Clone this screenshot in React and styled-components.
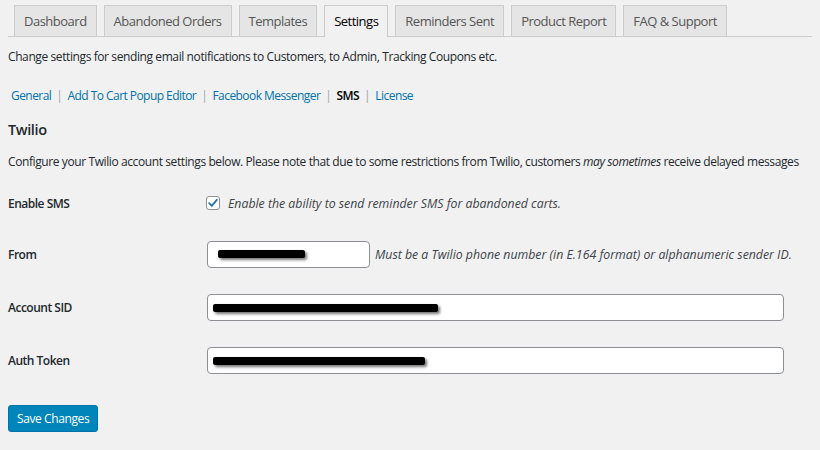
import React from "react";
import styled, { createGlobalStyle } from "styled-components";

const Global = createGlobalStyle`
  html, body { margin: 0; padding: 0; background: #f1f1f1; }
  body {
    font-family: "Open Sans", "Noto Sans", "Liberation Sans", sans-serif;
    font-size: 12px;
    letter-spacing: -0.4px;
    color: #23282d;
  }
`;

const Page = styled.div`
  padding: 0 0 0 8px;
  width: 812px;
  box-sizing: border-box;
`;

const TabBar = styled.nav`
  display: flex;
  gap: 7px;
  padding: 5px 0 0 6px;
  border-bottom: 1px solid #ccc;
`;

const Tab = styled.a`
  display: block;
  box-sizing: border-box;
  line-height: 30px;
  padding: 0 9px;
  border: 1px solid #ccc;
  border-bottom: none;
  background: ${(p) => (p.$active ? "#f1f1f1" : "#e5e5e5")};
  color: ${(p) => (p.$active ? "#000" : "#555")};
  font-size: 13px;
  letter-spacing: -0.5px;
  text-decoration: none;
  margin-bottom: ${(p) => (p.$active ? "-1px" : "0")};
  height: ${(p) => (p.$active ? "32px" : "31px")};
  white-space: nowrap;
`;

const Text = styled.p`
  margin: ${(p) => p.$mt}px 0 0;
  line-height: 20px;
  font-size: 12px;
  color: #23282d;
  white-space: nowrap;
`;

const SubNav = styled.div`
  margin-top: 19px;
  line-height: 20px;
  font-size: 12px;
  display: flex;
  gap: 5px;
  padding-left: 3px;
  color: #a0a5aa;
`;

const SubLink = styled.a`
  color: ${(p) => (p.$current ? "#000" : "#0073aa")};
  font-weight: ${(p) => (p.$current ? 600 : 400)};
  letter-spacing: -0.55px;
  text-decoration: none;
`;

const Heading = styled.h2`
  margin: 14px 0 0;
  font-size: 14.5px;
  line-height: 20px;
  font-weight: 600;
  color: #23282d;
`;

const FormTable = styled.div`
  margin-top: 6px;
  display: grid;
  grid-template-columns: 199px 1fr;
`;

const Label = styled.div`
  font-weight: 600;
  font-size: 12px;
  letter-spacing: -0.5px;
  color: #23282d;
  height: ${(p) => p.$h}px;
  display: flex;
  align-items: center;
`;

const Field = styled.div`
  height: ${(p) => p.$h}px;
  display: flex;
  align-items: center;
  gap: 5px;
`;

const Check = styled.span`
  width: 14px;
  height: 14px;
  box-sizing: border-box;
  border: 1px solid #8c8f94;
  border-radius: 3px;
  background: #fff;
  display: inline-flex;
  align-items: center;
  justify-content: center;
  margin-right: 3px;
  margin-left: -1px;
`;

const Hint = styled.span`
  font-style: italic;
  font-size: 12.3px;
  letter-spacing: 0;
  color: #3c434a;
  white-space: nowrap;
`;

const InputWrap = styled.div`
  position: relative;
  width: ${(p) => p.$w}px;
  height: 27px;
`;

const Input = styled.div`
  box-sizing: border-box;
  width: 100%;
  height: 100%;
  background: #fff;
  border: 1px solid #8c8f94;
  border-radius: 4px;
`;

const Redaction = styled.span`
  position: absolute;
  left: ${(p) => p.$l}px;
  top: ${(p) => p.$t}px;
  width: ${(p) => p.$w}px;
  height: 8px;
  background: #000;
  border-radius: 2px;
  box-shadow: 2px 2px 3px rgba(0, 0, 0, 0.55);
`;

const Button = styled.button`
  margin-top: 18px;
  height: 27px;
  padding: 0 8px;
  background: #0085ba;
  border: 1px solid #0073aa;
  border-radius: 3px;
  color: #fff;
  font-family: inherit;
  font-size: 12px;
  letter-spacing: -0.4px;
  cursor: pointer;
`;

const tabs = [
  "Dashboard",
  "Abandoned Orders",
  "Templates",
  "Settings",
  "Reminders Sent",
  "Product Report",
  "FAQ & Support",
];

export default function App() {
  return (
    <Page>
      <Global />
      <TabBar>
        {tabs.map((t) => (
          <Tab key={t} $active={t === "Settings"}>
            {t}
          </Tab>
        ))}
      </TabBar>
      <Text $mt={10}>
        Change settings for sending email notifications to Customers, to Admin, Tracking Coupons etc.
      </Text>
      <SubNav>
        <SubLink>General</SubLink>|<SubLink>Add To Cart Popup Editor</SubLink>|
        <SubLink>Facebook Messenger</SubLink>|<SubLink $current>SMS</SubLink>|
        <SubLink>License</SubLink>
      </SubNav>
      <Heading>Twilio</Heading>
      <Text $mt={12}>
        Configure your Twilio account settings below. Please note that due to some restrictions from Twilio, customers <em>may sometimes</em> receive delayed messages
      </Text>
      <FormTable>
        <Label $h={50}>Enable SMS</Label>
        <Field $h={50}>
          <Check>
            <svg width="12" height="12" viewBox="0 0 12 12">
              <path d="M2.2 6.2 L4.8 8.8 L9.8 2.8" fill="none" stroke="#2271b1" strokeWidth="1.8" strokeLinecap="round" strokeLinejoin="round" />
            </svg>
          </Check>
          <Hint>Enable the ability to send reminder SMS for abandoned carts.</Hint>
        </Field>

        <Label $h={53}>From</Label>
        <Field $h={53}>
          <InputWrap $w={163}>
            <Input />
            <Redaction $l={11} $t={9} $w={87} />
          </InputWrap>
          <Hint>Must be a Twilio phone number (in E.164 format) or alphanumeric sender ID.</Hint>
        </Field>

        <Label $h={53}>Account SID</Label>
        <Field $h={53}>
          <InputWrap $w={577}>
            <Input />
            <Redaction $l={6} $t={10} $w={225} />
          </InputWrap>
        </Field>

        <Label $h={53}>Auth Token</Label>
        <Field $h={53}>
          <InputWrap $w={577}>
            <Input />
            <Redaction $l={6} $t={10} $w={212} />
          </InputWrap>
        </Field>
      </FormTable>
      <Button>Save Changes</Button>
    </Page>
  );
}
